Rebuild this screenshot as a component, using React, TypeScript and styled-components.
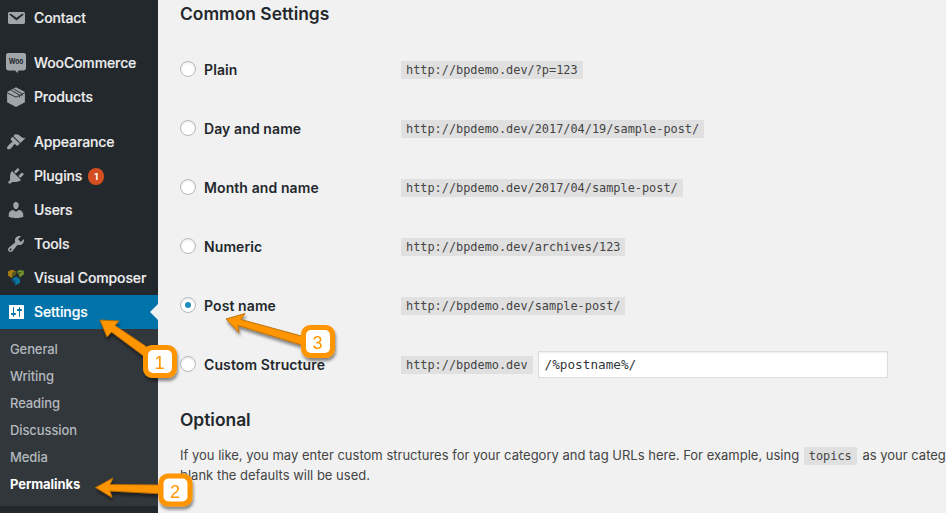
import React from 'react';
import styled, { createGlobalStyle } from 'styled-components';

const Global = createGlobalStyle`
  *, *::before, *::after { box-sizing: border-box; }
  body { margin: 0; background: #f1f1f1; overflow: hidden; font-family: Inter, "Liberation Sans", sans-serif; }
`;

const Page = styled.div`
  position: relative;
  display: flex;
  width: 946px;
  height: 513px;
  overflow: hidden;
  background: #f1f1f1;
`;

const Sidebar = styled.nav`
  flex: 0 0 158px;
  padding-top: 1px;
  background: #23282d;
`;

const MenuItem = styled.div<{ $gap?: boolean; $active?: boolean }>`
  position: relative;
  display: flex;
  align-items: center;
  gap: 8px;
  height: 34px;
  margin-top: ${p => (p.$gap ? 11 : 0)}px;
  padding-left: 6px;
  color: ${p => (p.$active ? '#fff' : '#eee')};
  background: ${p => (p.$active ? '#0073aa' : 'transparent')};
  font-size: 14px;
  font-weight: 500;
  white-space: nowrap;
  svg { flex: none; display: block; fill: ${p => (p.$active ? '#fff' : '#a0a5aa')}; }
`;

const MenuLabel = styled.span`
  padding-bottom: 2px;
  letter-spacing: -0.12px;
  -webkit-text-stroke: 0.15px currentColor;
`;

const Pointer = styled.i`
  position: absolute;
  right: 0;
  top: 9px;
  border: 8px solid transparent;
  border-right-color: #f1f1f1;
  border-left-width: 0;
`;

const Count = styled.span`
  display: grid;
  place-items: center;
  width: 16px;
  height: 17px;
  margin-left: -2px;
  border-radius: 9px;
  background: #d54e21;
  color: #fff;
  font-size: 9px;
  font-weight: 700;
`;

const Submenu = styled.div`
  padding: 7px 0 8px;
  background: #32373c;
`;

const SubItem = styled.div<{ $current?: boolean }>`
  height: 27px;
  padding-left: 10px;
  line-height: 27px;
  font-size: 13px;
  font-weight: ${p => (p.$current ? 700 : 500)};
  letter-spacing: ${p => (p.$current ? -0.05 : -0.1)}px;
  color: ${p => (p.$current ? '#fff' : '#b4b9be')};
`;

const Main = styled.main`
  flex: 1;
  min-width: 0;
  padding-left: 22px;
  color: #444;
`;

const Heading = styled.h2`
  margin: 0;
  padding-top: 1px;
  height: 27px;
  line-height: 26px;
  color: #23282d;
  font-size: 17.4px;
  font-weight: 600;
`;

const Options = styled.div`
  padding: 13px 0 12px;
`;

const Option = styled.div`
  display: flex;
  align-items: center;
  height: 59px;
`;

const OptionLabel = styled.label`
  display: flex;
  align-items: center;
  gap: 8px;
  flex: 0 0 221px;
  color: #23282d;
  font-size: 14px;
  font-weight: 600;
  letter-spacing: 0.1px;
`;

const Radio = styled.span<{ $checked?: boolean }>`
  display: grid;
  place-items: center;
  width: 16px;
  height: 16px;
  margin-top: -2px;
  border: 1px solid #b4b9be;
  border-radius: 50%;
  background: #fff;
  box-shadow: inset 0 1px 2px rgba(0, 0, 0, 0.1);
  &::after {
    content: '';
    width: 6px;
    height: 6px;
    border-radius: 50%;
    background: ${p => (p.$checked ? '#1e8cbe' : 'transparent')};
  }
`;

const Code = styled.code`
  display: inline-block;
  height: 18px;
  padding: 0 5px;
  line-height: 18px;
  background: #e0e0e0;
  color: #444;
  font-family: "DejaVu Sans Mono", monospace;
  font-size: 11.88px;
`;

const StructureInput = styled.input`
  width: 350px;
  height: 27px;
  margin: 0 0 0 5px;
  padding: 0 6px;
  border: 1px solid #ddd;
  outline: 0;
  background: #fff;
  box-shadow: inset 0 1px 2px rgba(0, 0, 0, 0.07);
  color: #32373c;
  font-family: "DejaVu Sans Mono", monospace;
  font-size: 12.7px;
`;

const Note = styled.p`
  margin: 12px 0 0;
  width: 900px;
  font-size: 13px;
  line-height: 20px;
  white-space: nowrap;
  code { margin: 0 2px 0 1px; }
`;

const Annotations = styled.svg`
  position: absolute;
  inset: 0;
  pointer-events: none;
`;

const Icon = ({ d }: { d: string }) => (
  <svg width="20" height="20" viewBox="0 0 20 20"><path d={d} /></svg>
);

const paths = {
  mail: 'M3.87 4h13.25C18.37 4 19 4.59 19 5.79v8.42c0 1.19-.63 1.79-1.88 1.79H3.87c-1.25 0-1.88-.6-1.88-1.79V5.79c0-1.2.63-1.79 1.88-1.79zm6.62 8.6l6.74-5.53c.24-.2.43-.66.13-1.07-.29-.41-.82-.42-1.17-.17l-5.7 3.86L4.8 5.83c-.35-.25-.88-.24-1.17.17-.3.41-.11.87.13 1.07z',
  brush: 'M14.48 11.06L7.41 3.99l1.5-1.5c.5-.56 2.3-.47 3.51.32 1.21.8 1.43 1.28 2.91 2.1 1.18.64 2.45 1.26 4.45.85zm-.71.71L6.7 4.7 4.93 6.47c-.39.39-.39 1.02 0 1.41l1.06 1.06c.39.39.39 1.03 0 1.42-.6.6-1.43 1.11-2.21 1.69-.35.26-.7.53-1.01.84C1.43 14.23.4 16.08 1.4 17.07c.99 1 2.84-.03 4.18-1.36.31-.31.58-.66.85-1.02.57-.78 1.08-1.61 1.69-2.21.39-.39 1.02-.39 1.41 0l1.06 1.06c.39.39 1.02.39 1.41 0z',
  plug: 'M13.11 4.36L9.87 7.6 8 5.73l3.24-3.24c.35-.34 1.05-.2 1.56.32.52.51.66 1.21.31 1.55zm-8 1.77l.91-1.12 9.01 9.01-1.19.84c-.71.71-2.63 1.16-3.82 1.16H6.14L4.9 17.26c-.59.59-1.54.59-2.12 0-.59-.58-.59-1.53 0-2.12l1.24-1.24v-3.88c0-1.13.4-3.19 1.09-3.89zm7.26 3.97l3.24-3.24c.34-.35 1.04-.21 1.55.31.52.51.66 1.21.31 1.55l-3.24 3.25z',
  user: 'M10 9.25c-2.27 0-2.73-3.44-2.73-3.44C7 4.02 7.82 2 9.97 2c2.16 0 2.98 2.02 2.71 3.81 0 0-.41 3.44-2.68 3.44zm0 2.57L12.72 10c2.39 0 4.52 2.33 4.52 4.53v2.49s-3.65 1.13-7.24 1.13c-3.65 0-7.24-1.13-7.24-1.13v-2.49c0-2.25 1.94-4.48 4.47-4.48z',
  wrench: 'M16.68 9.77c-1.34 1.34-3.3 1.67-4.95.99l-5.41 6.52c-.99.99-2.59.99-3.58 0s-.99-2.59 0-3.57l6.52-5.42c-.68-1.65-.35-3.61.99-4.95 1.28-1.28 3.12-1.62 4.72-1.06l-2.89 2.89 2.82 2.82 2.86-2.87c.53 1.58.18 3.39-1.08 4.65zM3.81 16.21c.4.39 1.04.39 1.43 0 .4-.4.4-1.04 0-1.43-.39-.4-1.03-.4-1.43 0-.39.39-.39 1.03 0 1.43z',
  sliders: 'M18 16V4c0-.55-.45-1-1-1H4c-.55 0-1 .45-1 1v12c0 .55.45 1 1 1h13c.55 0 1-.45 1-1zM8 11h1c.55 0 1 .45 1 1s-.45 1-1 1H8v1.5c0 .28-.22.5-.5.5s-.5-.22-.5-.5V13H6c-.55 0-1-.45-1-1s.45-1 1-1h1V5.5c0-.28.22-.5.5-.5s.5.22.5.5V11zm5-2h-1c-.55 0-1-.45-1-1s.45-1 1-1h1V5.5c0-.28.22-.5.5-.5s.5.22.5.5V7h1c.55 0 1 .45 1 1s-.45 1-1 1h-1v5.5c0 .28-.22.5-.5.5s-.5-.22-.5-.5V9z',
};

const WooIcon = () => (
  <svg width="20" height="20" viewBox="0 0 20 20">
    <path d="M2.500 0h15A2.400 2.400 0 0 1 20 2.500v12.600a2.400 2.400 0 0 1-2.500 2.400H12.300L11.700 20 9 17.500H2.500A2.400 2.400 0 0 1 0 15.100V2.500A2.400 2.400 0 0 1 2.500 0z" />
    <text x="10" y="11.300" textAnchor="middle" textLength="14.500" lengthAdjust="spacingAndGlyphs" fontFamily="Inter" fontSize="7.500" fontWeight="700" fill="#23282d">Woo</text>
  </svg>
);

const BoxIcon = () => (
  <svg width="20" height="20" viewBox="0 0 20 20">
    <path d="M10 .3L18.900 5v10.300L10 19.900 1.100 15.300V5z" />
    <path d="M1 5.800l9 4.400 9-4.400M10 10.200l-.1-.1M5.300 3.400l8.300 4.600v2.600M7.600 2l8.300 4.700v2.500" fill="none" stroke="#23282d" strokeWidth="0.900" />
  </svg>
);

const Cubes = () => (
  <svg width="20" height="20" viewBox="0 0 20 20">
    <path d="M2 3.500L5.500 1.700 9.500 3v4L8 7.500 5.500 10 2 7.500z" fill="#a97c12" />
    <path d="M10.500 4L13.500 2l4.300.8v3.700L13.500 9.500l-.5-2.500z" fill="#6f932f" />
    <path d="M9.500 3L6.500 4.500 5.500 10 8 7.500l1.500-.5zM10.500 4l2 1.500.5 3 .5-2.500 2-2z" fill="#4d5a25" />
    <path d="M6 11l4-2.500 4 2.500v3.800L9.500 17.500 8 14 6 13.500z" fill="#0b749e" />
    <path d="M6 11l3.500 2 .5 4.500L8 14 6 13.500z" fill="#0a516f" />
  </svg>
);

const menu: { label: string; icon: React.ReactNode; gap?: boolean; active?: boolean; count?: number }[] = [
  { label: 'Contact', icon: <Icon d={paths.mail} /> },
  { label: 'WooCommerce', icon: <WooIcon />, gap: true },
  { label: 'Products', icon: <BoxIcon /> },
  { label: 'Appearance', icon: <Icon d={paths.brush} />, gap: true },
  { label: 'Plugins', icon: <Icon d={paths.plug} />, count: 1 },
  { label: 'Users', icon: <Icon d={paths.user} /> },
  { label: 'Tools', icon: <Icon d={paths.wrench} /> },
  { label: 'Visual Composer', icon: <Cubes /> },
  { label: 'Settings', icon: <Icon d={paths.sliders} />, active: true },
];

const options = [
  { label: 'Plain', url: 'http://bpdemo.dev/?p=123' },
  { label: 'Day and name', url: 'http://bpdemo.dev/2017/04/19/sample-post/' },
  { label: 'Month and name', url: 'http://bpdemo.dev/2017/04/sample-post/' },
  { label: 'Numeric', url: 'http://bpdemo.dev/archives/123' },
  { label: 'Post name', url: 'http://bpdemo.dev/sample-post/', checked: true },
  { label: 'Custom Structure', url: 'http://bpdemo.dev', custom: true },
];

const callouts = [
  { n: 1, x: 143, y: 345, arrow: 'M100 320L119 321L115 325.500L150 349L145 357L111.500 332L107 337Z' },
  { n: 2, x: 158.5, y: 473.5, arrow: 'M95.500 487.500L113 478L110 484.500L165 485L165 494L110 491L112 497.500Z' },
  { n: 3, x: 301, y: 325, arrow: 'M226 319L245 313.500L241 319.500L305 337L303 345.500L238 325.500L239 332.500Z' },
];

export default function App() {
  return (
    <Page>
      <Global />
      <Sidebar>
        {menu.map(m => (
          <MenuItem key={m.label} $gap={m.gap} $active={m.active}>
            {m.icon}
            <MenuLabel>{m.label}</MenuLabel>
            {m.count && <Count>{m.count}</Count>}
            {m.active && <Pointer />}
          </MenuItem>
        ))}
        <Submenu>
          {['General', 'Writing', 'Reading', 'Discussion', 'Media', 'Permalinks'].map(s => (
            <SubItem key={s} $current={s === 'Permalinks'}>{s}</SubItem>
          ))}
        </Submenu>
      </Sidebar>
      <Main>
        <Heading>Common Settings</Heading>
        <Options>
          {options.map(o => (
            <Option key={o.label}>
              <OptionLabel><Radio $checked={o.checked} />{o.label}</OptionLabel>
              <Code>{o.url}</Code>
              {o.custom && <StructureInput defaultValue="/%postname%/" />}
            </Option>
          ))}
        </Options>
        <Heading>Optional</Heading>
        <Note>
          If you like, you may enter custom structures for your category and tag URLs here. For example, using <Code>topics</Code> as your category base<br />
          blank the defaults will be used.
        </Note>
      </Main>
      <Annotations width="946" height="513" viewBox="0 0 946 513">
        <defs>
          <filter id="drop" x="-20%" y="-20%" width="150%" height="160%">
            <feDropShadow dx="1" dy="3" stdDeviation="1.800" floodColor="#000" floodOpacity="0.450" />
          </filter>
        </defs>
        {callouts.map(c => (
          <g key={c.n} filter="url(#drop)">
            <path d={c.arrow} fill="#ff9500" stroke="#b86b00" strokeWidth="0.900" strokeLinejoin="round" />
            <rect x={c.x + 2.5} y={c.y + 2.5} width="29" height="28" rx="6.500" fill="#ff9500" stroke="#ff9500" strokeWidth="5" />
            <rect x={c.x + 5} y={c.y + 5} width="24" height="23" rx="5" fill="#fff" />
            <text x={c.x + 16.5} y={c.y + 24} textAnchor="middle" fontFamily="Liberation Sans" fontSize="18" fill="#ff9500">{c.n}</text>
          </g>
        ))}
      </Annotations>
    </Page>
  );
}
